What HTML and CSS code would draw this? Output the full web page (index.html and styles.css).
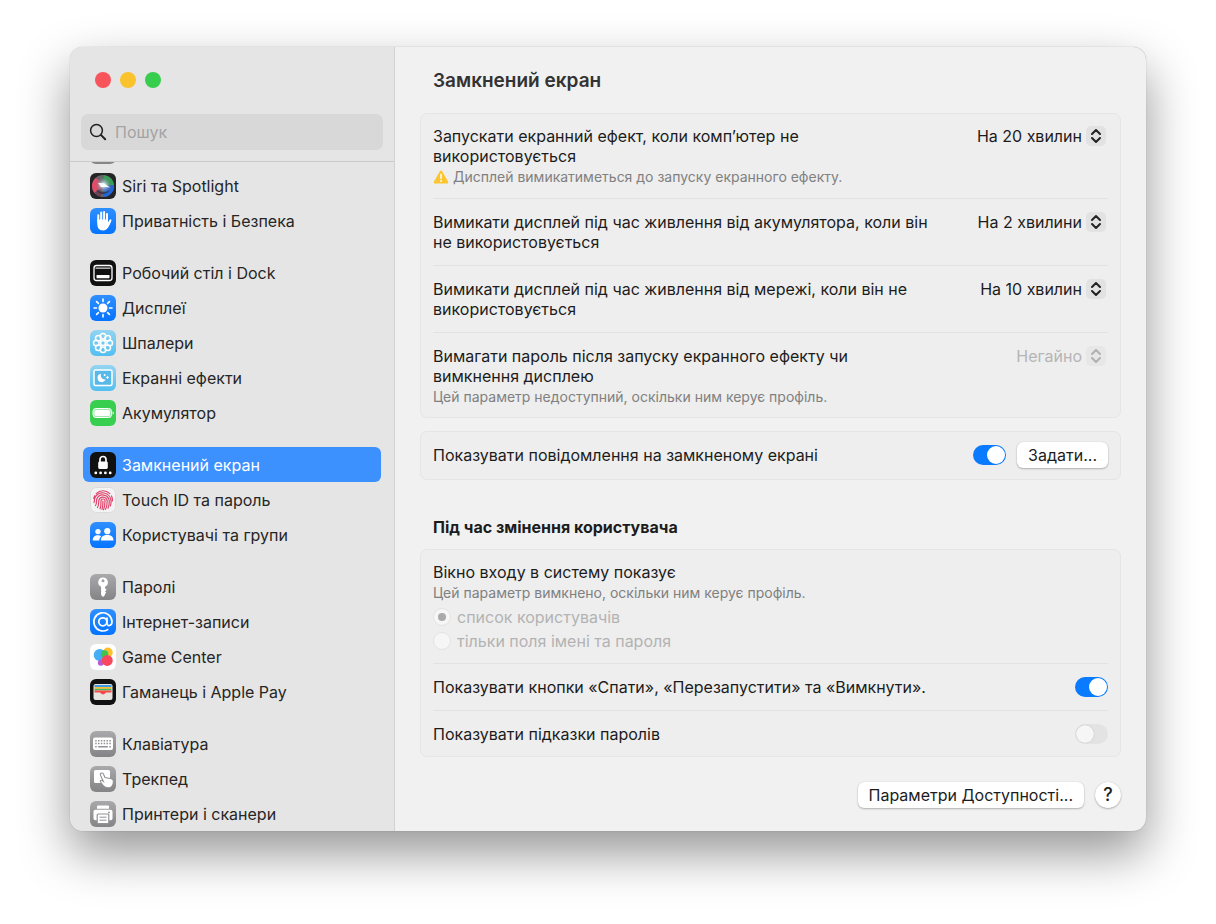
FILE: index.html
```html
<!DOCTYPE html>
<html lang="uk">
<head>
<meta charset="utf-8">
<meta name="viewport" content="width=device-width, initial-scale=1">
<title>Замкнений екран</title>
<link rel="stylesheet" href="styles.css">
</head>
<body>
<div class="window">
  <aside class="sidebar">
    <div class="sidebar-head">
      <div class="lights">
        <button class="light light-red" type="button" aria-label="Закрити"></button>
        <button class="light light-yellow" type="button" aria-label="Згорнути"></button>
        <button class="light light-green" type="button" aria-label="Розгорнути"></button>
      </div>
      <label class="search">
        <svg width="18" height="18" viewBox="0 0 18 18" fill="none" stroke="#222" stroke-linecap="round"><circle cx="7.5" cy="7.5" r="5.9" stroke-width="1.5"/><path d="M11.9 11.9 16.2 16.2" stroke-width="2"/></svg>
        <input class="search-input" type="search" placeholder="Пошук" aria-label="Пошук">
      </label>
    </div>
    <nav class="list">
      <div class="group">
        <a class="item" href="#">
          <svg class="icon" viewBox="0 0 26 26">
            <defs>
              <linearGradient id="gray" x2="0" y2="1"><stop offset="0" stop-color="#a9a9ab"/><stop offset="1" stop-color="#848486"/></linearGradient>
              <linearGradient id="blue" x2="0" y2="1"><stop offset="0" stop-color="#2f8fff"/><stop offset="1" stop-color="#0574ff"/></linearGradient>
              <linearGradient id="sky" x2="0" y2="1"><stop offset="0" stop-color="#93d4f1"/><stop offset="1" stop-color="#52bff0"/></linearGradient>
            </defs>
            <rect width="26" height="26" rx="6" fill="url(#gray)"/><rect x="5" y="5" width="16" height="7" rx="3.5" fill="none" stroke="#fff" stroke-width="1.5"/><rect x="5" y="14" width="16" height="7" rx="3.5" fill="#fff"/></svg>
          <span>Центр керування</span></a>
        <a class="item" href="#">
          <svg class="icon" viewBox="0 0 26 26">
            <defs><radialGradient id="siri"><stop offset="0" stop-color="#fff"/><stop offset=".3" stop-color="#b9cfe0" stop-opacity=".8"/><stop offset="1" stop-color="#555" stop-opacity="0"/></radialGradient></defs>
            <rect width="26" height="26" rx="6" fill="#242426"/><circle cx="13" cy="13" r="11" fill="#66666a"/>
            <path d="M13 13 6 4.700A11 11 0 0 0 4.500 20Z" fill="#ea4a68"/><path d="M13 13 4.500 20A11 11 0 0 0 11 23.800Z" fill="#6b4358"/>
            <path d="M13 13 14 2.200A11 11 0 0 1 24 12Z" fill="#32a355"/><path d="M13 13 24 12A11 11 0 0 1 13 24Z" fill="#2166d8"/>
            <path d="M6 17c5 2 9 3.500 14-.500-2 4.500-9 7-14 .500Z" fill="#2b2c3b" opacity=".8"/>
            <circle cx="13.500" cy="12" r="9" fill="url(#siri)"/><path d="m8 10 6 .2 6 4.200-4.500-.4L11 14Z" fill="#fff" opacity=".9"/>
          </svg>
          <span>Siri та Spotlight</span></a>
        <a class="item" href="#">
          <svg class="icon" viewBox="0 0 26 26"><rect width="26" height="26" rx="6" fill="url(#blue)"/><g stroke="#fff" stroke-width="2" stroke-linecap="round" fill="none"><path d="M8.300 7.200V14M11.200 4.500V13M14.100 4.100V13M17 6V15"/><path d="m20.400 12.500-3 5" stroke-width="2.200"/></g><path d="M7.300 11.500h10.700v3.500l1.900-2.300 1.200.9c-1.900 3.600-3 9-8.100 9-4.300 0-5.700-3.200-5.700-7Z" fill="#fff"/></svg>
          <span>Приватність і Безпека</span></a>
      </div>
      <div class="group">
        <a class="item" href="#">
          <svg class="icon" viewBox="0 0 26 26"><rect width="26" height="26" rx="6" fill="#111"/><rect x="4" y="5.500" width="18" height="15" rx="2.500" fill="none" stroke="#fff" stroke-width="1.300"/><path d="M5.500 8.200h15" stroke="#aaa" stroke-width="1.600"/><rect x="6.500" y="15" width="13" height="3.200" rx=".6" fill="#fff"/></svg>
          <span>Робочий стіл і Dock</span></a>
        <a class="item" href="#">
          <svg class="icon" viewBox="0 0 26 26"><rect width="26" height="26" rx="6" fill="url(#blue)"/><circle cx="13" cy="13" r="4.500" fill="#fff"/><path d="M13 4v2.500M13 19.500V22M4 13h2.500M19.500 13H22M6.600 6.600l1.800 1.800M17.600 17.600l1.800 1.800M6.600 19.400l1.800-1.800M17.600 8.400l1.800-1.800" stroke="#fff" stroke-width="1.600" stroke-linecap="round"/></svg>
          <span>Дисплеї</span></a>
        <a class="item" href="#">
          <svg class="icon" viewBox="0 0 26 26"><rect width="26" height="26" rx="6" fill="url(#sky)"/><g fill="none" stroke="#fff" stroke-width="1.500"><circle cx="13" cy="13" r="2.400"/><circle cx="13" cy="6.300" r="2.800"/><circle cx="17.700" cy="8.300" r="2.800"/><circle cx="19.700" cy="13" r="2.800"/><circle cx="17.700" cy="17.700" r="2.800"/><circle cx="13" cy="19.700" r="2.800"/><circle cx="8.300" cy="17.700" r="2.800"/><circle cx="6.300" cy="13" r="2.800"/><circle cx="8.300" cy="8.300" r="2.800"/></g></svg>
          <span>Шпалери</span></a>
        <a class="item" href="#">
          <svg class="icon" viewBox="0 0 26 26"><rect width="26" height="26" rx="6" fill="url(#sky)"/><rect x="4" y="5" width="18" height="15.500" rx="1.500" fill="#58b8e8" stroke="#fff" stroke-width="1.500"/><path d="M11 8.800a4.200 4.200 0 1 0 4.700 5.500 4 4 0 0 1-4.700-5.500Z" fill="#fff"/><circle cx="14.700" cy="10" r="1" fill="#fff"/><path d="m17.500 10.500.6 1.300 1.300.6-1.300.6-.6 1.300-.6-1.300-1.300-.6 1.300-.6Z" fill="#fff"/></svg>
          <span>Екранні ефекти</span></a>
        <a class="item" href="#">
          <svg class="icon" viewBox="0 0 26 26"><rect width="26" height="26" rx="6" fill="#38cf50"/><rect x="3" y="8.500" width="18.500" height="9" rx="2.800" fill="#9fe8ab" stroke="#fff" stroke-width="1"/><rect x="4.500" y="10" width="15.500" height="6" rx="1.500" fill="#fff"/><path d="M22.600 11.200c1.500.5 1.500 3.100 0 3.600Z" fill="#fff"/></svg>
          <span>Акумулятор</span></a>
      </div>
      <div class="group">
        <a class="item item-active" href="#" aria-current="page">
          <svg class="icon" viewBox="0 0 26 26"><rect width="26" height="26" rx="6" fill="#111"/><path d="M10 10V7.500a3 3 0 0 1 6 0V10" fill="none" stroke="#fff" stroke-width="1.700"/><rect x="8.200" y="9.500" width="9.600" height="7.500" rx="1.400" fill="#fff"/><g fill="#fff"><circle cx="5.800" cy="20.900" r="1.400"/><circle cx="10.600" cy="20.900" r="1.400"/><circle cx="15.400" cy="20.900" r="1.400"/><circle cx="20.200" cy="20.900" r="1.400"/></g></svg>
          <span>Замкнений екран</span></a>
        <a class="item" href="#">
          <svg class="icon" viewBox="0 0 26 26"><rect x=".5" y=".5" width="25" height="25" rx="6" fill="#f3f3f3" stroke="#dcdcdc"/><g fill="none" stroke="#e0446c" stroke-width="1.200" stroke-linecap="round"><path d="M6.200 6.600a9.500 9.500 0 0 1 13.600 0M3.700 11.500a9.500 9.500 0 0 1 1-2.800M21.500 9a9.500 9.500 0 0 1 .9 5M4 15.500c.7-1 .2-3 .8-4.500a8.500 8.500 0 0 1 16.300 3c0 2-.2 3.500-.8 5M5.500 18.500c1.600-2 .6-4.500 1.200-6.200a6.500 6.500 0 0 1 12.600 1.700c0 2.500-.3 5-1.300 7.200M7.500 20.500c1.700-2.500 1-5.200 1.300-7.200a4.300 4.300 0 0 1 8.400.7c0 3-.3 6-1.700 8.300M10 21.800c1.400-2.800.8-5.500 1-7.800a2 2 0 0 1 4 0c0 3.200-.2 6-1.500 8.700M12.900 14.200c.1 3 0 5.500-.9 8.200"/></g></svg>
          <span>Touch ID та пароль</span></a>
        <a class="item" href="#">
          <svg class="icon" viewBox="0 0 26 26"><rect width="26" height="26" rx="6" fill="url(#blue)"/><g fill="#fff"><circle cx="8" cy="9.600" r="2.700"/><path d="M2.700 18.600c0-3.500 2.200-5.300 5.300-5.300 1.300 0 2.400.3 3.200.9-1.300 1.100-1.900 2.600-1.900 4.400Z"/><circle cx="17.300" cy="9.200" r="3.100"/><path d="M10.800 18.600c0-3.800 2.700-5.500 6.500-5.500s6.200 1.800 6.200 5.500Z"/></g></svg>
          <span>Користувачі та групи</span></a>
      </div>
      <div class="group">
        <a class="item" href="#">
          <svg class="icon" viewBox="0 0 26 26"><rect width="26" height="26" rx="6" fill="url(#gray)"/><path fill-rule="evenodd" d="M13 3.500a4.800 4.800 0 0 1 2 9.200v1.600l1.700 1.500-1.700 1.500 1.200 1.400-1.200 1.300v1L13 23l-1.900-2v-8.300A4.800 4.800 0 0 1 13 3.500Zm0 1.700a1.500 1.500 0 1 0 0 3 1.500 1.500 0 0 0 0-3Z" fill="#fff"/></svg>
          <span>Паролі</span></a>
        <a class="item" href="#">
          <svg class="icon" viewBox="0 0 26 26"><rect width="26" height="26" rx="6" fill="url(#blue)"/><g fill="none" stroke="#fff" stroke-width="1.700" stroke-linecap="round"><circle cx="12.800" cy="12.800" r="4"/><path d="M17 9v5.200c0 3.600 5 3 5-1.400a9.100 9.100 0 1 0-4.300 7.800"/></g></svg>
          <span>Інтернет-записи</span></a>
        <a class="item" href="#">
          <svg class="icon" viewBox="0 0 26 26"><rect width="26" height="26" rx="6" fill="#fff"/><circle cx="17.800" cy="8.500" r="4.900" fill="#fbc02d"/><circle cx="9.700" cy="11" r="6" fill="#45aef5"/><circle cx="14.500" cy="10" r="3.800" fill="#3cc453"/><circle cx="10.800" cy="18.800" r="3" fill="#b65bd6"/><circle cx="17.200" cy="16.400" r="5.500" fill="#f8485e"/></svg>
          <span>Game Center</span></a>
        <a class="item" href="#">
          <svg class="icon" viewBox="0 0 26 26"><rect width="26" height="26" rx="6" fill="#111"/><rect x="3.500" y="5" width="19" height="16" rx="2" fill="#e6e4df"/><path d="M4.500 6h17v2h-17z" fill="#3c9be8"/><path d="M4.500 8h17v1.800h-17z" fill="#fbbd2e"/><path d="M4.500 9.800h17v1.600h-17z" fill="#45b85c"/><path d="M4.500 11.400h17v2.200h-5.300c-.8 0-1.200 1.900-3.200 1.900s-2.400-1.900-3.200-1.900H4.500Z" fill="#f8484c"/></svg>
          <span>Гаманець і Apple Pay</span></a>
      </div>
      <div class="group">
        <a class="item" href="#">
          <svg class="icon" viewBox="0 0 26 26"><rect width="26" height="26" rx="6" fill="url(#gray)"/><rect x="3" y="6.500" width="20" height="12.500" rx="2" fill="#fff"/><g stroke="#929294" stroke-width="1.500" fill="none"><path d="M5.200 9.700h15.600" stroke-dasharray="1.500 1.320"/><path d="M5.200 12.500h15.600" stroke-dasharray="1.500 1.320"/><path d="M5.200 15.800h1.500M8.200 15.800h9.600M19.300 15.800h1.500"/></g></svg>
          <span>Клавіатура</span></a>
        <a class="item" href="#">
          <svg class="icon" viewBox="0 0 26 26"><rect width="26" height="26" rx="6" fill="url(#gray)"/><rect x="4" y="4" width="16" height="13" rx="1.500" fill="#fff"/><path d="M10.500 7.500c1.200-1.100 2.500-.4 3 .8l1.500 3.300 6.500 1.200c1.800.5 2 1.500 1.900 3-.2 3.500-1.600 6-5 6-3.500 0-5.300-1.700-7-4.500l-1.200-2.100c.2-1.200 1.500-1.300 2.400-.5l.7.500-2.700-5.700c-.3-.8-.5-1.500-.1-2Z" fill="#fff" stroke="#929294" stroke-width="1.100"/></svg>
          <span>Трекпед</span></a>
        <a class="item" href="#">
          <svg class="icon" viewBox="0 0 26 26"><rect width="26" height="26" rx="6" fill="url(#gray)"/><path d="M7 7.800V5.500q0-1 1-1h10q1 0 1 1v2.300Z" fill="#fff"/><rect x="3.500" y="8.700" width="19" height="10.500" rx="2" fill="#fff"/><circle cx="19" cy="11.500" r=".9" fill="#929294"/><rect x="7.200" y="13" width="11.600" height="9.600" rx="1" fill="#fff" stroke="#929294" stroke-width="1.200"/><path d="M9.500 16.200h7M9.500 19.200h7" stroke="#929294"/></svg>
          <span>Принтери і сканери</span></a>
      </div>
    </nav>
  </aside>

  <main class="main">
    <h1 class="title">Замкнений екран</h1>

    <section class="card">
      <div class="row">
        <div class="text">
          <label for="saver">Запускати екранний ефект, коли комп’ютер не<br>використовується</label>
          <p class="hint">
            <svg width="16" height="14" viewBox="0 0 16 14"><path d="M8 .6c.6 0 1 .3 1.300.8l5.700 10c.6 1.100 0 2.200-1.200 2.200H2.200C1 13.600.4 12.500 1 11.400l5.700-10C7 .9 7.400.6 8 .6Z" fill="#fcc42d"/><path d="M8 4.500v4" stroke="#fff" stroke-width="1.500" stroke-linecap="round"/><circle cx="8" cy="11" r=".9" fill="#fff"/></svg>
            Дисплей вимикатиметься до запуску екранного ефекту.</p>
        </div>
        <div class="popup">
          <select class="select" id="saver"><option>На 20 хвилин</option></select>
          <svg class="arrows" viewBox="0 0 20 20"><path d="m6 8 4-4 4 4M6 12l4 4 4-4"/></svg>
        </div>
      </div>
      <div class="row">
        <div class="text"><label for="battery">Вимикати дисплей під час живлення від акумулятора, коли він<br>не використовується</label></div>
        <div class="popup">
          <select class="select" id="battery"><option>На 2 хвилини</option></select>
          <svg class="arrows" viewBox="0 0 20 20"><path d="m6 8 4-4 4 4M6 12l4 4 4-4"/></svg>
        </div>
      </div>
      <div class="row">
        <div class="text"><label for="power">Вимикати дисплей під час живлення від мережі, коли він не<br>використовується</label></div>
        <div class="popup">
          <select class="select" id="power"><option>На 10 хвилин</option></select>
          <svg class="arrows" viewBox="0 0 20 20"><path d="m6 8 4-4 4 4M6 12l4 4 4-4"/></svg>
        </div>
      </div>
      <div class="row">
        <div class="text">
          <label for="lock">Вимагати пароль після запуску екранного ефекту чи<br>вимкнення дисплею</label>
          <p class="hint">Цей параметр недоступний, оскільки ним керує профіль.</p>
        </div>
        <div class="popup">
          <select class="select" id="lock" disabled><option>Негайно</option></select>
          <svg class="arrows" viewBox="0 0 20 20"><path d="m6 8 4-4 4 4M6 12l4 4 4-4"/></svg>
        </div>
      </div>
    </section>

    <section class="card card-message">
      <div class="row row-line">
        <label class="text" for="message">Показувати повідомлення на замкненому екрані</label>
        <input class="switch" id="message" type="checkbox" role="switch" checked>
        <button class="button" type="button">Задати...</button>
      </div>
    </section>

    <h2 class="subtitle">Під час змінення користувача</h2>

    <section class="card">
      <div class="row row-choices">
        <fieldset class="choices">
          <legend class="legend">Вікно входу в систему показує</legend>
          <p class="hint">Цей параметр вимкнено, оскільки ним керує профіль.</p>
          <label class="choice"><input class="radio" type="radio" name="login" checked disabled>список користувачів</label>
          <label class="choice"><input class="radio" type="radio" name="login" disabled>тільки поля імені та пароля</label>
        </fieldset>
      </div>
      <div class="row row-line">
        <label class="text" for="buttons">Показувати кнопки «Спати», «Перезапустити» та «Вимкнути».</label>
        <input class="switch" id="buttons" type="checkbox" role="switch" checked>
      </div>
      <div class="row row-line">
        <label class="text" for="hints">Показувати підказки паролів</label>
        <input class="switch" id="hints" type="checkbox" role="switch" disabled>
      </div>
    </section>

    <footer class="footer">
      <button class="button" type="button">Параметри Доступності...</button>
      <button class="help" type="button" aria-label="Довідка">?</button>
    </footer>
  </main>
</div>
</body>
</html>
```
FILE: styles.css
```css
* { box-sizing: border-box; }

body {
  margin: 0;
  padding: 47px 70px 93px;
  background: #fff;
  color: #1c1c1c;
  font-family: Inter, "Liberation Sans", sans-serif;
  font-size: 16px;
  line-height: 20px;
}

button, input, select { font: inherit; color: inherit; margin: 0; }

.window {
  display: flex;
  height: calc(100vh - 140px);
  border-radius: 13px;
  overflow: hidden;
  background: #f1f1f1;
  box-shadow: 0 22px 50px rgba(0, 0, 0, .42), 0 0 1px rgba(0, 0, 0, .4);
}

/* Sidebar */
.sidebar {
  flex: 0 0 325px;
  display: flex;
  flex-direction: column;
  background: #e5e5e5;
  border-right: 1px solid #d2d2d2;
}

.sidebar-head {
  padding: 25px 11px 11px;
  border-bottom: 1px solid #cbcbcb;
}

.lights {
  display: flex;
  gap: 9px;
  padding-left: 14px;
  margin-bottom: 26px;
}

.light {
  width: 16px;
  height: 16px;
  padding: 0;
  border: 0;
  border-radius: 50%;
}
.light-red { background: #f8545c; }
.light-yellow { background: #fac22d; }
.light-green { background: #38ce4d; }

.search {
  display: flex;
  align-items: center;
  gap: 8px;
  height: 36px;
  padding: 0 8px;
  border-radius: 7px;
  background: #d8d8d8;
}

.search-input {
  flex: 1;
  min-width: 0;
  padding: 0;
  border: 0;
  background: none;
  outline: none;
  appearance: none;
}
.search-input::placeholder { color: #a3a3a3; opacity: 1; }

.list {
  flex: 1;
  min-height: 0;
  display: flex;
  flex-direction: column;
  justify-content: flex-end;
  gap: 17px;
  padding: 0 13px;
  overflow: hidden;
}

.group { flex: none; }

.item {
  display: flex;
  align-items: center;
  gap: 6px;
  height: 35px;
  padding: 0 7px;
  border-radius: 6px;
  color: #262626;
  text-decoration: none;
  white-space: nowrap;
}
.item-active { background: #3d91ff; color: #fff; }

.icon { flex: none; width: 26px; height: 26px; }

/* Settings pane */
.main {
  flex: 1;
  min-width: 0;
  padding: 20px 25px 24px;
  overflow: auto;
}

.title {
  margin: 0 13px 18px;
  font-size: 19px;
  line-height: 28px;
  font-weight: 600;
  color: #333;
}

.subtitle {
  margin: 37px 13px 12px;
  font-size: 16px;
  font-weight: 700;
}

.card {
  padding: 0 12px;
  border: 1px solid #e5e5e5;
  border-radius: 7px;
  background: #eee;
}
.card-message { margin-top: 13px; }

.row {
  display: flex;
  align-items: flex-start;
  gap: 11px;
  padding: 12px 0 11px;
}
.row + .row { border-top: 1px solid #e2e2e2; padding: 13px 0; }
.row + .row:last-child { padding-bottom: 10px; }
.row-choices { padding-bottom: 10px; }
.row-line { align-items: center; }
.row + .row-line:last-child { padding-bottom: 12px; }
.row-line:only-child { padding: 10px 0 11px; }

.text { flex: 1; min-width: 0; }

.hint {
  display: flex;
  align-items: center;
  gap: 4px;
  margin: 0;
  padding-top: 1px;
  font-size: 14px;
  line-height: 20px;
  color: #808080;
}

.popup {
  display: grid;
  align-items: center;
  justify-items: end;
  padding-right: 2px;
}

.select, .arrows { grid-area: 1 / 1; }

.select {
  appearance: none;
  height: 20px;
  padding: 0 24px 0 0;
  border: 0;
  background: none;
  text-align-last: right;
}
.select:disabled { color: #b5b5b5; opacity: 1; }

.arrows {
  width: 20px;
  height: 20px;
  border-radius: 5px;
  background: #e2e2e2;
  fill: none;
  stroke: #222;
  stroke-width: 2;
  stroke-linecap: round;
  stroke-linejoin: round;
  pointer-events: none;
}
.select:disabled + .arrows { background: #e7e7e7; stroke: #b0b0b0; }

.switch {
  appearance: none;
  flex: none;
  width: 33px;
  height: 20px;
  padding: 1px;
  border-radius: 10px;
  background: #0a7aff;
}
.switch::before {
  content: "";
  display: block;
  width: 18px;
  height: 18px;
  margin-left: auto;
  border-radius: 50%;
  background: #fff;
}
.switch:disabled { background: #e3e3e3; }
.switch:not(:checked)::before { margin-left: 0; background: #f6f6f6; box-shadow: 0 0 1px rgba(0, 0, 0, .3); }

.button {
  height: 26px;
  padding: 0 11px;
  border: 0;
  border-radius: 6px;
  background: #fff;
  box-shadow: 0 1px 2px rgba(0, 0, 0, .25), 0 0 1px rgba(0, 0, 0, .2);
  white-space: nowrap;
}

.choices { flex: 1; min-width: 0; margin: 0; padding: 0; border: 0; }
.choices .hint { padding-bottom: 2px; }
.legend { padding: 0; }

.choice {
  display: flex;
  align-items: center;
  gap: 6px;
  height: 24px;
  color: #b3b3b3;
}

.radio {
  appearance: none;
  display: grid;
  place-items: center;
  width: 18px;
  height: 18px;
  border: 1px solid #e3e3e3;
  border-radius: 50%;
  background: #f6f6f6;
}
.radio:checked::before {
  content: "";
  width: 8px;
  height: 8px;
  border-radius: 50%;
  background: #aaa;
}

.footer {
  display: flex;
  justify-content: flex-end;
  gap: 11px;
  padding-top: 25px;
}

.help {
  width: 26px;
  height: 26px;
  padding: 0;
  border: 0;
  border-radius: 50%;
  background: #fff;
  box-shadow: 0 1px 2px rgba(0, 0, 0, .25), 0 0 1px rgba(0, 0, 0, .2);
  font-size: 18px;
  font-weight: 500;
}
```
